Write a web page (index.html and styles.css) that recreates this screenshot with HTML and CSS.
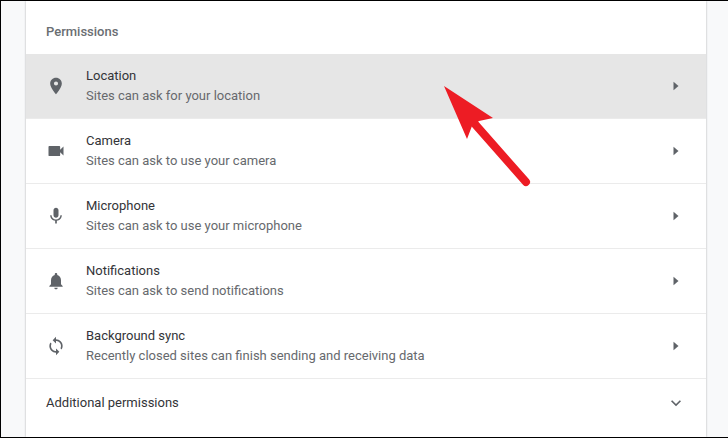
FILE: index.html
```html
<!DOCTYPE html>
<html lang="en">
<head>
<meta charset="utf-8">
<title>Permissions</title>
<link rel="stylesheet" href="styles.css">
</head>
<body>
<div class="frame">
  <main class="card">
    <h2 class="heading">Permissions</h2>
    <div class="row active">
      <svg class="icon" viewBox="0 0 24 24"><path d="M12 2C8.13 2 5 5.13 5 9c0 5.25 7 13 7 13s7-7.75 7-13c0-3.87-3.13-7-7-7zm0 9.500a2.500 2.500 0 1 1 0-5 2.500 2.500 0 0 1 0 5z"/></svg>
      <div class="text"><div class="title">Location</div><div class="sub">Sites can ask for your location</div></div>
      <svg class="caret" viewBox="0 0 24 24"><path d="M9 7l6 5-6 5z"/></svg>
    </div>
    <div class="row">
      <svg class="icon" viewBox="0 0 24 24"><path d="M17 10.500V7a1 1 0 0 0-1-1H4a1 1 0 0 0-1 1v10a1 1 0 0 0 1 1h12a1 1 0 0 0 1-1v-3.500l4 4v-11l-4 4z"/></svg>
      <div class="text"><div class="title">Camera</div><div class="sub">Sites can ask to use your camera</div></div>
      <svg class="caret" viewBox="0 0 24 24"><path d="M9 7l6 5-6 5z"/></svg>
    </div>
    <div class="row">
      <svg class="icon" viewBox="0 0 24 24"><path d="M12 14c1.660 0 3-1.340 3-3V5c0-1.660-1.340-3-3-3S9 3.340 9 5v6c0 1.660 1.340 3 3 3zm5.300-3c0 3-2.540 5.100-5.300 5.100S6.700 14 6.700 11H5c0 3.410 2.720 6.230 6 6.720V21h2v-3.280c3.280-.48 6-3.300 6-6.720h-1.700z"/></svg>
      <div class="text"><div class="title">Microphone</div><div class="sub">Sites can ask to use your microphone</div></div>
      <svg class="caret" viewBox="0 0 24 24"><path d="M9 7l6 5-6 5z"/></svg>
    </div>
    <div class="row">
      <svg class="icon" viewBox="0 0 24 24"><path d="M12 22c1.100 0 2-.9 2-2h-4c0 1.100.9 2 2 2zm6-6v-5c0-3.070-1.630-5.640-4.500-6.320V4c0-.83-.67-1.500-1.500-1.500s-1.500.67-1.500 1.500v.68C7.640 5.360 6 7.920 6 11v5l-2 2v1h16v-1l-2-2z"/></svg>
      <div class="text"><div class="title">Notifications</div><div class="sub">Sites can ask to send notifications</div></div>
      <svg class="caret" viewBox="0 0 24 24"><path d="M9 7l6 5-6 5z"/></svg>
    </div>
    <div class="row">
      <svg class="icon" viewBox="0 0 24 24"><path d="M12 4V1L8 5l4 4V6c3.310 0 6 2.690 6 6 0 1.010-.25 1.970-.7 2.800l1.460 1.460A7.930 7.930 0 0 0 20 12c0-4.420-3.580-8-8-8zm0 14c-3.310 0-6-2.690-6-6 0-1.010.25-1.970.7-2.800L5.240 7.740A7.930 7.930 0 0 0 4 12c0 4.420 3.580 8 8 8v3l4-4-4-4v3z"/></svg>
      <div class="text"><div class="title">Background sync</div><div class="sub">Recently closed sites can finish sending and receiving data</div></div>
      <svg class="caret" viewBox="0 0 24 24"><path d="M9 7l6 5-6 5z"/></svg>
    </div>
    <div class="row more">
      <div class="title grow">Additional permissions</div>
      <svg class="chevron" viewBox="0 0 24 24"><path d="M7.410 8.590L12 13.170l4.590-4.580L18 10l-6 6-6-6z"/></svg>
    </div>
  </main>
  <svg class="arrow" viewBox="0 0 100 100" width="100" height="100"><path d="M82 96 L30 37" class="shaft"/><path d="M0 0 L49 32 L35 35 L28 40 L23 53 Z" class="head"/></svg>
</div>
</body>
</html>
```
FILE: styles.css
```css
* { box-sizing: border-box; }
html, body { margin: 0; padding: 0; }
body { width: 728px; height: 438px; overflow: hidden; background: #000; font-family: Roboto, "Liberation Sans", sans-serif; }
.frame { position: relative; height: 436px; margin: 1px 0 0 1px; padding-left: 25px; padding-right: 22px; background: #f8f9fa; overflow: hidden; }
.card { height: 100%; background: #fff; box-shadow: 0 0 2px rgba(60, 64, 67, .4); }
.heading { margin: 0; height: 53px; padding: 23px 0 0 20px; font-size: 13px; line-height: 15px; font-weight: 500; color: #6a6e72; }
.row { display: flex; align-items: center; height: 65px; padding: 0 20px; border-top: 1px solid #ebebeb; }
.row.active { height: 64px; background: #e6e6e6; border-top: 0; }
.icon { width: 20px; height: 20px; margin-right: 20px; fill: #5f6368; flex: none; }
.text { flex: 1; }
.title { font-size: 13px; line-height: 20px; color: #333438; }
.sub { font-size: 13px; line-height: 20px; color: #66696d; }
.grow { flex: 1; margin-top: -11px; }
.more { height: 59px; }
.caret { width: 20px; height: 20px; fill: #5f6368; flex: none; }
.chevron { width: 20px; height: 20px; fill: #5f6368; flex: none; margin-top: -11px; }
.arrow { position: absolute; left: 443px; top: 85px; overflow: visible; }
.shaft { stroke: #ed1c24; stroke-width: 8; stroke-linecap: round; fill: none; }
.head { fill: #ed1c24; }
```
